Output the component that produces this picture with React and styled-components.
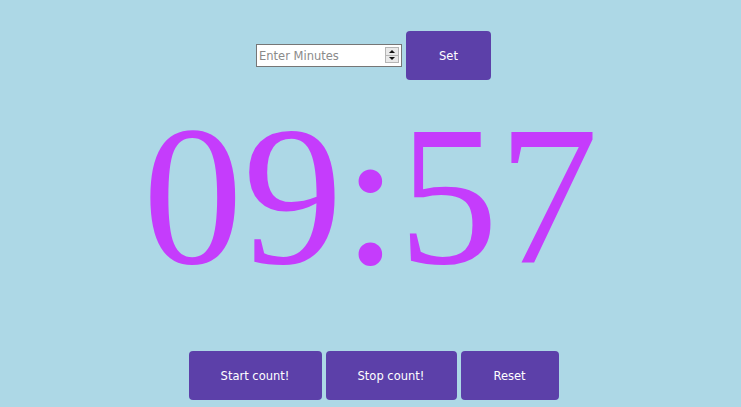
import React from "react";
import styled, { createGlobalStyle } from "styled-components";

const GlobalStyle = createGlobalStyle`
  body {
    margin: 0;
    background: #add8e6;
    font-family: "DejaVu Sans", Verdana, sans-serif;
  }
`;

const Page = styled.div`
  display: flex;
  flex-direction: column;
  align-items: center;
  height: 407px;
  padding-top: 31px;
  box-sizing: border-box;
`;

const Controls = styled.div`
  display: flex;
  align-items: center;
  gap: 4px;
  margin-left: 6px;
`;

const Field = styled.span`
  position: relative;
  display: inline-block;
`;

const MinutesInput = styled.input`
  box-sizing: border-box;
  width: 146px;
  height: 23px;
  padding: 0 18px 0 2px;
  border: 1px solid #767676;
  background: #fff;
  font-family: "DejaVu Sans", Verdana, sans-serif;
  font-size: 11.5px;
  color: #333;
  outline: none;

  &::placeholder {
    color: #8a8a8a;
  }
`;

// drawn spinner, sits over the right edge of the input
const Spinner = styled.span`
  position: absolute;
  right: 3px;
  top: 3px;
  width: 14px;
  height: 16px;
  display: flex;
  flex-direction: column;
  border: 1px solid #b5b5b5;
  box-sizing: border-box;
  background: #e9e9e9;
`;

const SpinHalf = styled.span`
  flex: 1;
  display: flex;
  align-items: center;
  justify-content: center;
  border-top: ${(p) => (p.$down ? "1px solid #b5b5b5" : "none")};

  &::after {
    content: "";
    border-left: 3px solid transparent;
    border-right: 3px solid transparent;
    ${(p) =>
      p.$down ? "border-top: 3px solid #111;" : "border-bottom: 3px solid #111;"}
  }
`;

const Button = styled.button`
  width: ${(p) => p.$w}px;
  height: 49px;
  padding: 0;
  border: none;
  border-radius: 4px;
  background: #5c40a9;
  color: #fff;
  font-family: "DejaVu Sans", Verdana, sans-serif;
  font-size: 11.5px;
  white-space: nowrap;
  text-align: center;
  cursor: pointer;
`;

const Clock = styled.div`
  margin-top: 1px;
  font-family: "Liberation Serif", "Times New Roman", serif;
  font-size: 200px;
  line-height: 230px;
  color: #c53cfc;
`;

const Actions = styled.div`
  display: flex;
  gap: 4px;
  margin-top: auto;
  margin-bottom: 7px;
  margin-left: 6px;
`;

export default function App() {
  return (
    <>
      <GlobalStyle />
      <Page>
        <Controls>
          <Field>
            <MinutesInput type="text" placeholder="Enter Minutes" />
            <Spinner>
              <SpinHalf />
              <SpinHalf $down />
            </Spinner>
          </Field>
          <Button $w={85}>Set</Button>
        </Controls>
        <Clock>09:57</Clock>
        <Actions>
          <Button $w={133}>Start count!</Button>
          <Button $w={131}>Stop count!</Button>
          <Button $w={98}>Reset</Button>
        </Actions>
      </Page>
    </>
  );
}
